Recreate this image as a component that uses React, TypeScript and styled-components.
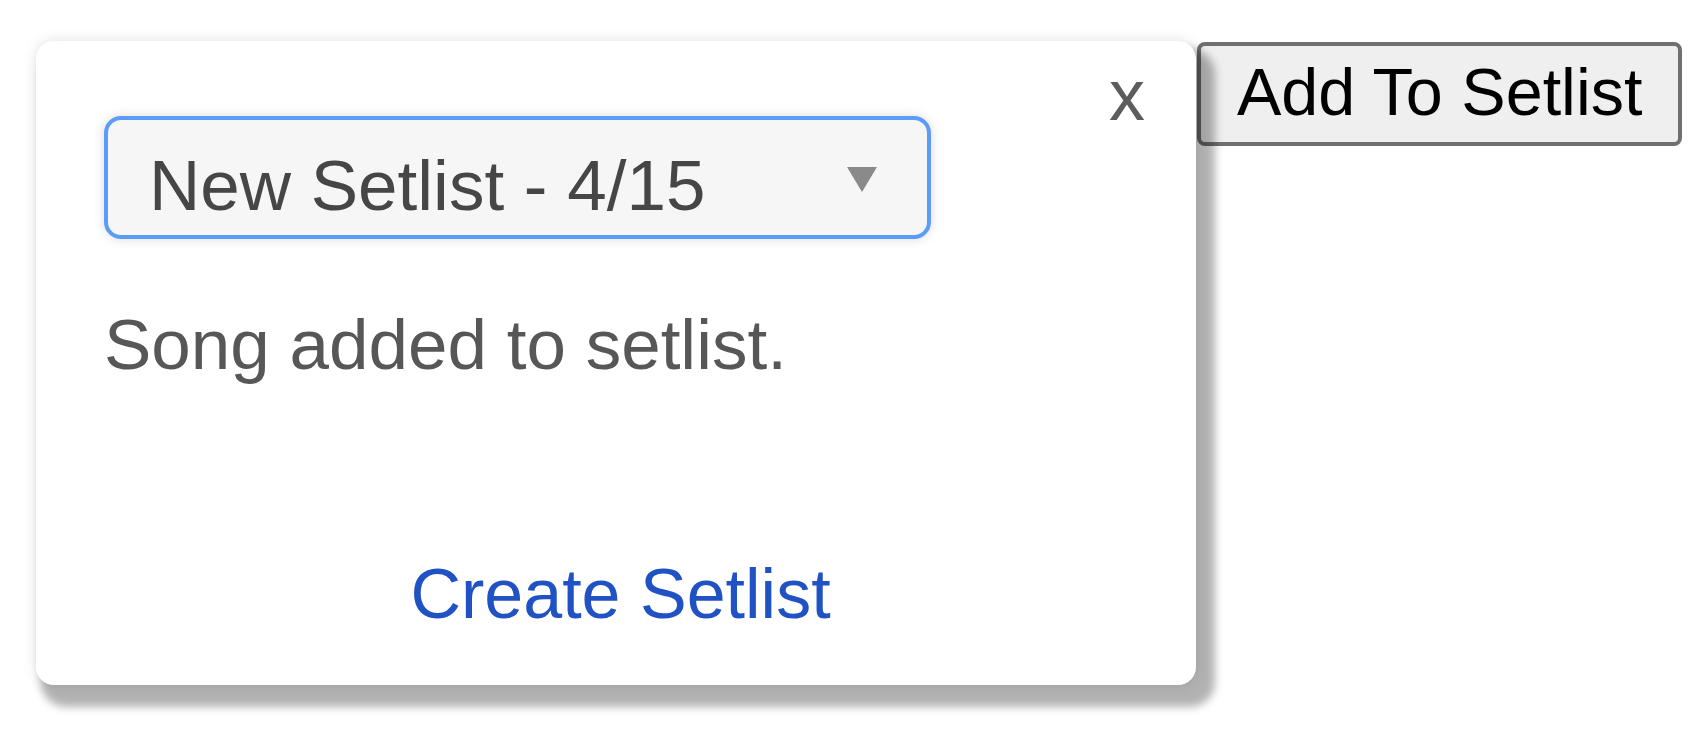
import React from 'react'
import styled, { createGlobalStyle } from 'styled-components'

const GlobalStyle = createGlobalStyle`
  body {
    margin: 0;
    background: #ffffff;
    font-family: "Liberation Sans", Arial, Helvetica, sans-serif;
  }
`

interface Props {
  setlistName: string
  songCount: number
  maxSongs: number
  message: string
}

export const SetlistPopover = ({ setlistName, songCount, maxSongs, message }: Props): JSX.Element => {
  return (
    <Popover>
      <CloseButton aria-label="Close">x</CloseButton>
      <SetlistSelect role="combobox" aria-expanded="false" tabIndex={0}>
        <SelectLabel>{`${setlistName} - ${songCount}/${maxSongs}`}</SelectLabel>
        <SelectArrow width="30" height="25" viewBox="0 0 30 25" aria-hidden="true">
          <polygon points="0,0 30,0 15,25" />
        </SelectArrow>
      </SetlistSelect>
      <Message>{message}</Message>
      <CreateLink href="#">Create Setlist</CreateLink>
    </Popover>
  )
}

export default function App(): JSX.Element {
  return (
    <>
      <GlobalStyle />
      <Page>
        <SetlistPopover
          setlistName="New Setlist"
          songCount={4}
          maxSongs={15}
          message="Song added to setlist."
        />
        <AddButton>Add To Setlist</AddButton>
      </Page>
    </>
  )
}

const Page = styled.div`
  box-sizing: border-box;
  min-height: 100vh;
  display: flex;
  align-items: flex-start;
  gap: 1px;
  padding: 41px 0 0 36px;
`

const Popover = styled.div`
  position: relative;
  z-index: 1;
  box-sizing: border-box;
  width: 1160px;
  padding: 75px 59px 51px 68px;
  background: #ffffff;
  border-radius: 18px;
  box-shadow: 12px 15px 8px 7px rgba(0, 0, 0, 0.3), 0 0 14px rgba(0, 0, 0, 0.12);
`

const CloseButton = styled.button`
  position: absolute;
  top: 14px;
  right: 51px;
  padding: 0;
  border: none;
  background: none;
  font-family: inherit;
  font-size: 72px;
  line-height: 80px;
  color: #5c5c5c;
  cursor: pointer;
`

const SetlistSelect = styled.div`
  box-sizing: border-box;
  display: flex;
  align-items: center;
  justify-content: space-between;
  width: 827px;
  height: 123px;
  padding: 0 50px 0 41px;
  border: 4px solid #5b9cf8;
  border-radius: 17px;
  background: #f6f6f6;
  box-shadow: 0 0 12px rgba(0, 0, 0, 0.14);
  cursor: pointer;
  outline: none;
`

const SelectLabel = styled.span`
  font-size: 71px;
  line-height: 80px;
  color: #464646;
  padding-top: 16px;
`

const SelectArrow = styled.svg`
  display: block;
  fill: #8a8a8a;
  margin-top: 3px;
`

const Message = styled.p`
  margin: 66px 0 0;
  font-size: 71px;
  line-height: 80px;
  color: #575757;
`

const CreateLink = styled.a`
  display: block;
  margin-top: 169px;
  text-align: center;
  font-size: 70px;
  line-height: 80px;
  color: #2152c4;
  text-decoration: none;
`

const AddButton = styled.button`
  box-sizing: border-box;
  margin-top: 1px;
  height: 104px;
  padding: 9px 36px 12px;
  border: 4px solid #707070;
  border-radius: 8px;
  background: #efefef;
  font-family: inherit;
  font-size: 66.5px;
  line-height: 75px;
  color: #000000;
  white-space: nowrap;
  cursor: pointer;
`
